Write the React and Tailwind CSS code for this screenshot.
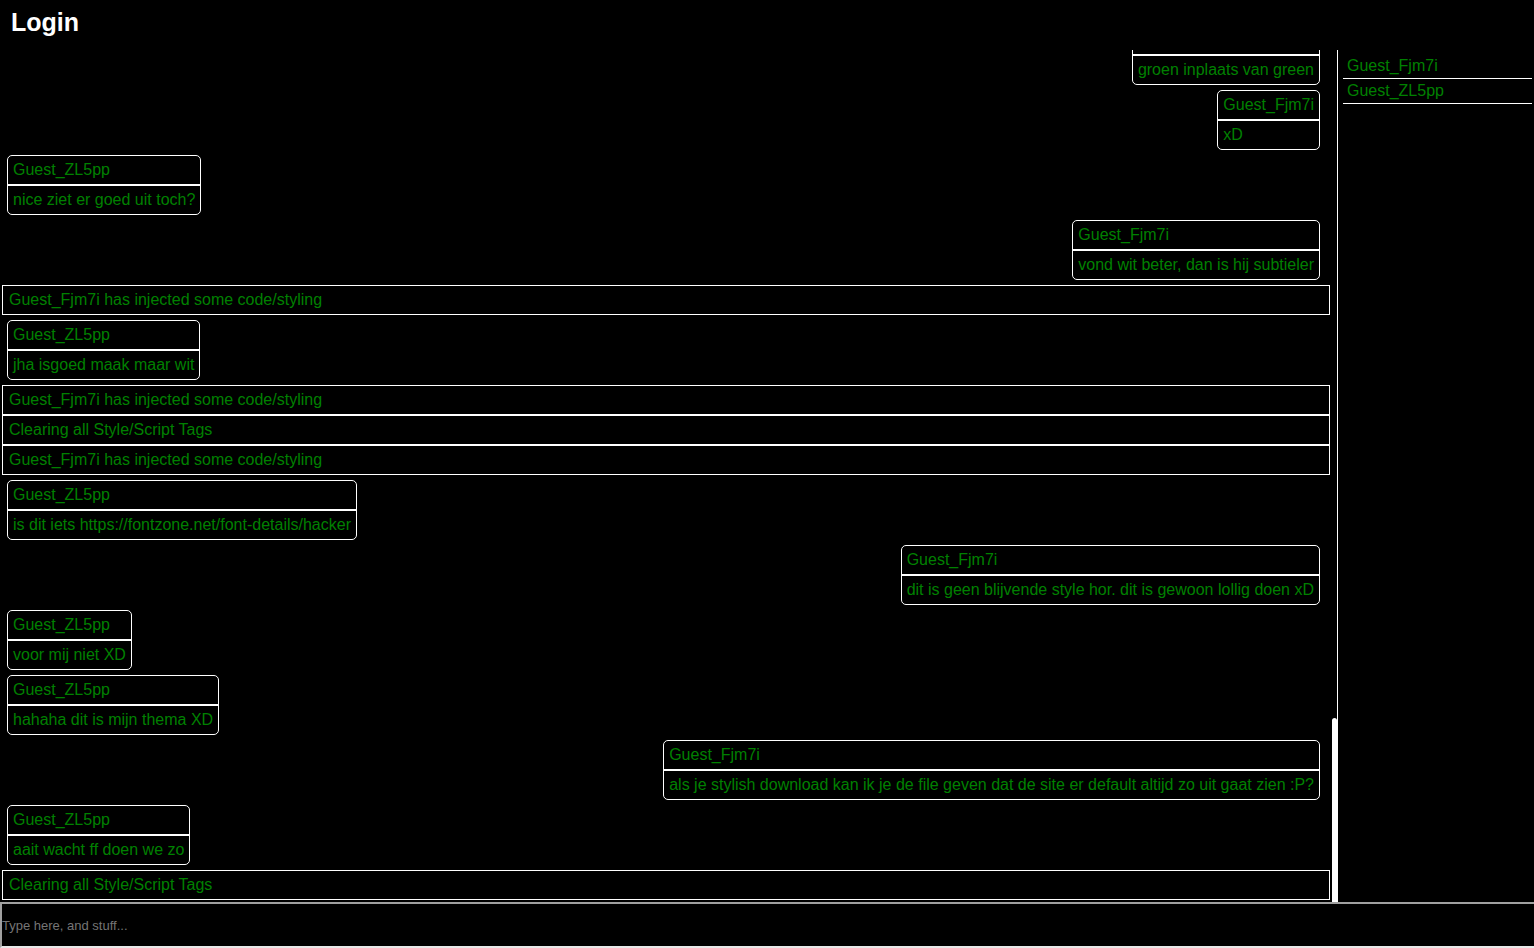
const feed = [
  { type: 'msg', side: 'right', user: 'Guest_Fjm7i', text: 'groen inplaats van green' },
  { type: 'msg', side: 'right', user: 'Guest_Fjm7i', text: 'xD' },
  { type: 'msg', side: 'left', user: 'Guest_ZL5pp', text: 'nice ziet er goed uit toch?' },
  { type: 'msg', side: 'right', user: 'Guest_Fjm7i', text: 'vond wit beter, dan is hij subtieler' },
  { type: 'sys', text: 'Guest_Fjm7i has injected some code/styling' },
  { type: 'msg', side: 'left', user: 'Guest_ZL5pp', text: 'jha isgoed maak maar wit' },
  { type: 'sys', text: 'Guest_Fjm7i has injected some code/styling' },
  { type: 'sys', text: 'Clearing all Style/Script Tags' },
  { type: 'sys', text: 'Guest_Fjm7i has injected some code/styling' },
  { type: 'msg', side: 'left', user: 'Guest_ZL5pp', text: 'is dit iets https://fontzone.net/font-details/hacker' },
  { type: 'msg', side: 'right', user: 'Guest_Fjm7i', text: 'dit is geen blijvende style hor. dit is gewoon lollig doen xD' },
  { type: 'msg', side: 'left', user: 'Guest_ZL5pp', text: 'voor mij niet XD' },
  { type: 'msg', side: 'left', user: 'Guest_ZL5pp', text: 'hahaha dit is mijn thema XD' },
  { type: 'msg', side: 'right', user: 'Guest_Fjm7i', text: 'als je stylish download kan ik je de file geven dat de site er default altijd zo uit gaat zien :P?' },
  { type: 'msg', side: 'left', user: 'Guest_ZL5pp', text: 'aait wacht ff doen we zo' },
  { type: 'sys', text: 'Clearing all Style/Script Tags' },
];

const users = ['Guest_Fjm7i', 'Guest_ZL5pp'];

function Bubble({ side, user, text }) {
  return (
    <div
      className={
        side === 'right'
          ? 'w-fit ml-auto mr-[10px] my-[5px] border border-white rounded-[5px]'
          : 'w-fit ml-[5px] my-[5px] border border-white rounded-[5px]'
      }
    >
      <div className="h-[30px] px-[5px] flex items-center border-b-2 border-white whitespace-nowrap">{user}</div>
      <div className="h-[28px] px-[5px] flex items-center whitespace-nowrap">{text}</div>
    </div>
  );
}

function SystemLine({ text }) {
  return (
    <div className="h-[30px] border border-white px-[6px] flex items-center whitespace-nowrap">{text}</div>
  );
}

export default function App() {
  return (
    <div
      className="h-screen flex flex-col bg-black text-[#008000] text-[16px] overflow-hidden"
      style={{ fontFamily: '"Liberation Sans", Arial, sans-serif' }}
    >
      <header className="h-[50px] shrink-0 pl-[11px] pt-[8px]">
        <h1 className="text-white text-[25px] font-bold leading-[29px]">Login</h1>
      </header>

      <div className="flex-1 flex min-h-0">
        {/* chat log, scrolled to the bottom */}
        <div className="relative flex-1 min-w-0">
          <div className="h-full flex flex-col justify-end overflow-hidden pl-[2px] pr-[7px] pb-[2px]">
            <div>
              {feed.map((item, i) =>
                item.type === 'sys' ? (
                  <SystemLine key={i} text={item.text} />
                ) : (
                  <Bubble key={i} side={item.side} user={item.user} text={item.text} />
                )
              )}
            </div>
          </div>
          <div className="absolute right-0 bottom-0 w-[5px] h-[184px] bg-white rounded-t-[3px]" />
        </div>

        {/* online users */}
        <aside className="w-[197px] shrink-0 border-l border-white pt-[4px] pl-[5px] pr-[2px]">
          {users.map((u) => (
            <div key={u} className="h-[25px] pl-[4px] flex items-center border-b border-white">
              {u}
            </div>
          ))}
        </aside>
      </div>

      <input
        type="text"
        placeholder="Type here, and stuff..."
        className="h-[46px] shrink-0 w-full bg-black border-t-2 border-l-2 border-b-2 border-t-[#a0a0a0] border-l-[#a0a0a0] border-b-[#e8e8e8] text-[13px] text-[#008000] placeholder:text-[#757575] outline-none"
      />
    </div>
  );
}
